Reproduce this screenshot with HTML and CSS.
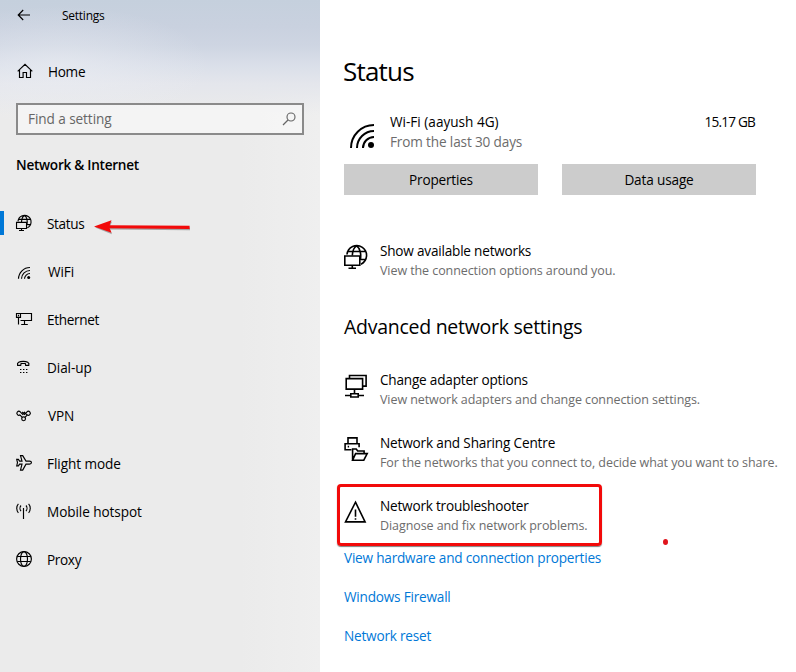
FILE: index.html
```
<!DOCTYPE html>
<html lang="en">
<head>
<meta charset="utf-8">
<title>Settings</title>
<link rel="stylesheet" href="styles.css">
</head>
<body>
<div class="window">
  <aside class="sidebar">
    <header class="titlebar">
      <svg class="back" viewBox="0 0 14 12" width="14" height="12"><path d="M13 6H1.2M6.2 1 1.2 6l5 5"/></svg>
      <span>Settings</span>
    </header>
    <a class="home">
      <svg class="icon" viewBox="0 0 16 16"><path d="M1.7 8.3 9 1.4 16.3 8.3M3.5 6.9v7.6h3.6V9.5h3.4v5h4V6.9"/></svg>
      <span>Home</span>
    </a>
    <div class="search">
      <span>Find a setting</span>
      <svg viewBox="0 0 14 14" width="14" height="14"><circle cx="9" cy="5" r="4"/><path d="M6 8 1 13"/></svg>
    </div>
    <h2 class="section">Network &amp; Internet</h2>
    <nav class="nav">
      <a class="row active">
        <svg class="icon globe" viewBox="0 0 24 24"><path d="M3 9.5A9.8 9.8 0 1 1 17 19.2M3.7 6.5h17.6M17 14.5h4.5M8.3 10.5C8.5 6 10 2.5 12.5.9 16 3 17.5 9 16.3 15"/><path d="M.8 11h15v9.3h-15zM8.3 20.3v3M4.5 23.3H12"/></svg>
        <span>Status</span>
        <svg class="arrow" viewBox="0 0 98 16" width="98" height="16"><path class="shade" d="M1 8.6 18 2.6 16 7.6 96 8.4v2.8L16 10.6l2 4.6z"/><path class="ink" d="M0 7.6 17.5 1.3 15.6 6.2 95.6 6.7v3.2L15.6 9.2l2 4.5z"/></svg>
      </a>
      <a class="row nudge">
        <svg class="icon" viewBox="0 0 16 16"><path d="M2.5 15.8A11.5 11.5 0 0 1 14 4.5M5.5 15.8A8.5 8.5 0 0 1 14 7.5M8.5 15.8A5.5 5.5 0 0 1 14 10.5"/><circle class="solid" cx="12.7" cy="14.4" r="1.5"/></svg>
        <span>WiFi</span>
      </a>
      <a class="row ethernet">
        <svg class="icon" viewBox="0 0 16 16"><path d="M4.5 2.5h11v7h-11M.5 2.5h4v3.9h-4zM2.5 3.8v1.4M2.5 6.4v7.1M8.5 9.5v4M5.2 13.5h6.6"/></svg>
        <span>Ethernet</span>
      </a>
      <a class="row">
        <svg class="icon" viewBox="0 0 16 16"><path d="M1.6 6.4C.6 3.4 3.6 2.4 7.2 2.4s6.6 1 5.6 4H9.7l-.4-1.9H5.1l-.4 1.9z"/><path class="dots" d="M4 10.5h7.5M4 13.5h7.5"/></svg>
        <span>Dial-up</span>
      </a>
      <a class="row nudge">
        <svg class="icon" viewBox="0 0 16 16"><circle cx="7.6" cy="11.8" r="1.9"/><path d="M6.2 10.4 3.9 7.9M9 10.4l2.3-2.5M4.2 7.8a2 2 0 1 1 0-3l3 3M11 4.8a2 2 0 1 1 0 3l-3-3M6.2 5 7.6 6.4 9 5M8 7.8 11 4.8"/></svg>
        <span>VPN</span>
      </a>
      <a class="row">
        <svg class="icon" viewBox="0 0 16 16"><path d="M4.5.6h2.2L10 6.1h3.5c2.6 0 2.6 3 0 3H10l-3.3 6H4.5L6 9.1H3.6l-1.2 1.8H.7l.8-3.3-.8-3.2h1.7l1.2 1.7H6z"/></svg>
        <span>Flight mode</span>
      </a>
      <a class="row">
        <svg class="icon" viewBox="0 0 16 16"><path d="M7.5 5v11M2.4.8C.2 3.2.2 7.3 2.4 9.8M5 2.5c-1.3 1.5-1.3 4.1 0 5.6M12.6.8c2.2 2.4 2.2 6.5 0 9M10 2.5c1.3 1.5 1.3 4.1 0 5.6"/></svg>
        <span>Mobile hotspot</span>
      </a>
      <a class="row proxy">
        <svg class="icon" viewBox="0 0 16 16"><circle cx="8" cy="8" r="7.4"/><ellipse cx="8" cy="8" rx="3.5" ry="7.4"/><path d="M1.2 5.5h13.6M1.2 10.5h13.6"/></svg>
        <span>Proxy</span>
      </a>
    </nav>
  </aside>

  <main class="content">
    <h1 class="title">Status</h1>
    <section class="connection">
      <svg class="signal" viewBox="0 0 24 24" width="24" height="24"><path d="M1 24A23 23 0 0 1 24 1M7 24A17 17 0 0 1 24 7M13 24a11 11 0 0 1 11-11"/><circle class="solid" cx="21" cy="21" r="3"/></svg>
      <div class="network">
        <div class="ssid">Wi-Fi (aayush 4G)</div>
        <div class="period">From the last 30 days</div>
      </div>
      <div class="usage">15.17 GB</div>
    </section>
    <div class="buttons">
      <button class="props">Properties</button>
      <button>Data usage</button>
    </div>
    <div class="item available">
      <svg class="big" viewBox="0 0 24 24"><path d="M3 9.5A9.8 9.8 0 1 1 17 19.2M3.7 6.5h17.6M17 14.5h4.5M8.3 10.5C8.5 6 10 2.5 12.5.9 16 3 17.5 9 16.3 15"/><path d="M.8 11h15v9.3h-15zM8.3 20.3v3M4.5 23.3H12"/></svg>
      <div><div class="name">Show available networks</div><div class="desc">View the connection options around you.</div></div>
    </div>
    <h2 class="subtitle">Advanced network settings</h2>
    <div class="list">
      <div class="item">
        <svg class="big" viewBox="0 0 24 24"><path d="M5.5 4.5V1.5h16.6v10.6h-3.3M2.2 4.6h16.4v10.5H2.2zM10.5 15v4.5M1 21.5h5.8M14.2 21.5H20M6.8 19.8h7.4v3.2H6.8z"/></svg>
        <div><div class="name">Change adapter options</div><div class="desc">View network adapters and change connection settings.</div></div>
      </div>
      <div class="item">
        <svg class="big" viewBox="0 0 24 24"><path d="M4 6.8V.9h9v5.9M7.5 12.7H1.1V6.8h14v3.4M3.7 9.6h1.4M13 6.8H4"/><path d="M8.6 23.2V12h3.6l1.5 2h6.4v2.6M8.6 23.2l3-6.6h11.6l-3.4 6.6z"/></svg>
        <div><div class="name wide">Network and Sharing Centre</div><div class="desc">For the networks that you connect to, decide what you want to share.</div></div>
      </div>
      <div class="item marked">
        <svg class="big" viewBox="0 0 24 24"><path d="M11.5 2.2 21.1 21.9H1.5zM11.5 9.5v7.2M11.5 18.2v1.6"/></svg>
        <div><div class="name">Network troubleshooter</div><div class="desc">Diagnose and fix network problems.</div></div>
        <i class="dot"></i>
      </div>
    </div>
    <div class="links">
      <a>View hardware and connection properties</a>
      <a>Windows Firewall</a>
      <a>Network reset</a>
    </div>
  </main>
</div>
</body>
</html>
```
FILE: styles.css
```
*, *::before, *::after { box-sizing: border-box; }
body {
  margin: 0;
  background: #fff;
  color: #000;
  font: 13.6px/20px "Open Sans", "Noto Sans", sans-serif;
}
h1, h2 { margin: 0; font-weight: 400; }
svg { flex: none; fill: none; stroke: #000; stroke-width: 1.15; overflow: visible; }
svg .solid { fill: #000; stroke: none; }
.window { display: flex; width: 796px; height: 672px; overflow: hidden; }

.sidebar {
  width: 320px;
  flex: none;
  background:
    radial-gradient(ellipse 150px 60px at 60px 66px, rgba(238, 240, 245, .5), transparent),
    linear-gradient(180deg, #c5d0dd 0, #c9d1df 26px, #ced5e2 46px, #dadfe9 65px, #e4e6ec 84px, rgba(235, 235, 235, 0) 115px),
    linear-gradient(90deg, #ebebeb 75%, #efefef);
}
.titlebar {
  display: flex;
  align-items: center;
  height: 31px;
  padding-left: 17px;
  font-size: 12px;
  letter-spacing: -.25px;
}
.back { margin-right: 31px; margin-top: -2px; }
.icon { width: 16px; height: 16px; margin-top: -2px; }
.globe { stroke-width: 1.7; }
.home {
  display: flex;
  align-items: center;
  height: 48px;
  margin: 17px 0 0 16px;
  gap: 16px;
  letter-spacing: -.3px;
}
.search {
  display: flex;
  align-items: center;
  justify-content: space-between;
  height: 32px;
  margin: 7px 16px 0;
  padding: 0 6px 0 10px;
  border: 2px solid #8a8a8a;
  background: rgba(249, 249, 249, .65);
  color: #666;
  letter-spacing: -.08px;
}
.search span { margin-top: -1px; }
.search svg { stroke: #666; margin-top: -1px; }
.section {
  margin: 20px 0 0 16px;
  font-size: 13.6px;
  line-height: 20px;
  font-weight: 600;
  letter-spacing: -.27px;
}
.nav { margin-top: 25px; }
.row {
  position: relative;
  display: flex;
  align-items: center;
  gap: 15px;
  height: 48px;
  padding-left: 16px;
  letter-spacing: -.08px;
}
.nudge { gap: 16px; }
.active, .ethernet, .proxy { letter-spacing: -.35px; }
.active::before {
  content: "";
  position: absolute;
  left: 0;
  top: 11px;
  width: 4px;
  height: 24px;
  background: #0078d7;
}
.dots { stroke-dasharray: 1.4 1.6; }
.arrow { position: absolute; left: 94px; top: 19px; stroke: none; }
.arrow .ink { fill: #f20a0a; }
.arrow .shade { fill: #777; opacity: .6; }

.content { flex: 1; padding: 53px 0 0 24px; }
.title { margin-left: -1px; font-size: 26px; line-height: 36px; letter-spacing: -.8px; }
.connection { display: flex; width: 411px; height: 41px; margin-top: 23px; }
.signal { margin: 12px 16px 0 6px; stroke-width: 2; }
.network { flex: 1; }
.period { color: #6c6c6c; letter-spacing: -.15px; }
.usage { letter-spacing: -.8px; }
.buttons { display: flex; gap: 24px; margin-top: 11px; }
.buttons button {
  width: 194px;
  height: 31px;
  padding: 1px 0 0;
  border: 0;
  background: #ccc;
  color: #000;
  font: inherit;
  letter-spacing: -.15px;
}
.buttons .props { letter-spacing: -.2px; }
.item { position: relative; display: flex; gap: 12px; height: 39px; white-space: nowrap; }
.big { width: 24px; height: 24px; margin-top: 4px; stroke-width: 1.6; }
.available { margin-top: 46px; }
.name { letter-spacing: -.21px; }
.wide { letter-spacing: -.17px; }
.desc { font-size: 12.5px; line-height: 19px; letter-spacing: -.08px; color: #6c6c6c; }
.subtitle { margin-top: 34px; font-size: 19.5px; line-height: 26px; letter-spacing: -.27px; }
.list { display: grid; gap: 24px; margin-top: 30px; }
.marked::after {
  content: "";
  position: absolute;
  left: -7px;
  top: -12px;
  width: 265px;
  height: 62px;
  border: 3px solid #f20a0a;
  border-radius: 4px;
  box-shadow: 0 1px 1px rgba(0, 0, 0, .5);
}
.dot {
  position: absolute;
  left: 319px;
  top: 43px;
  width: 5px;
  height: 6px;
  border-radius: 50%;
  background: #e0141c;
}
.links { display: grid; gap: 19px; margin-top: 13px; color: #0078d7; letter-spacing: -.21px; }
```
